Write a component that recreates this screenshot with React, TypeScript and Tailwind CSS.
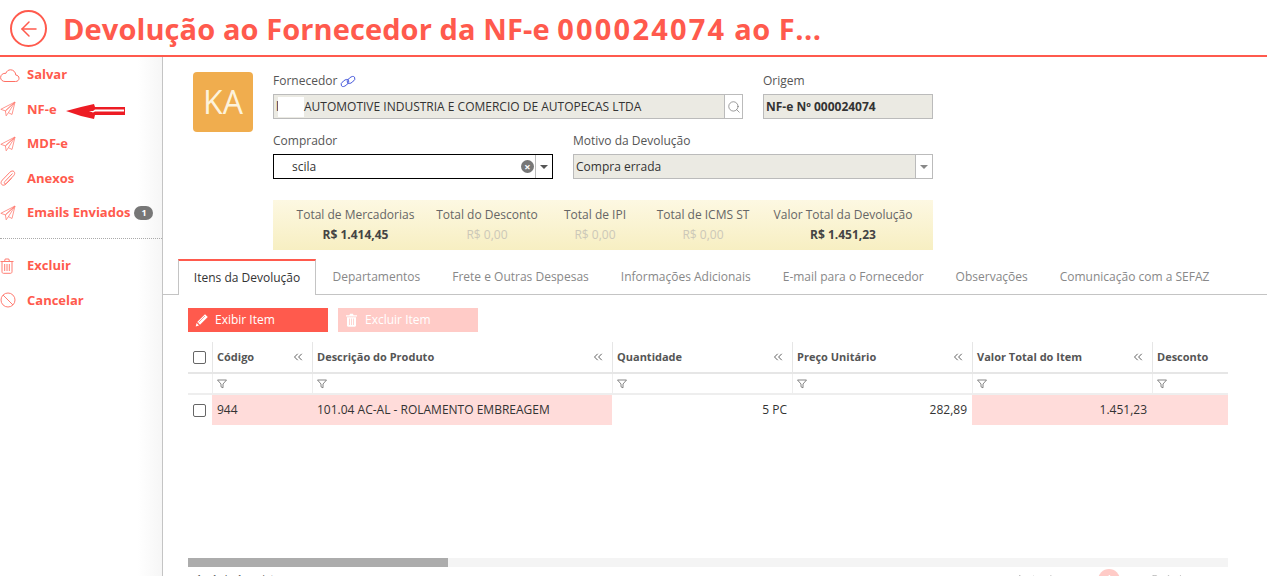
import { ArrowLeft, Search, ChevronsLeft } from 'lucide-react';

const red = '#ff5a4d';

const CloudIcon = () => (
  <svg width="20" height="16" viewBox="0 0 20 16" fill="none" stroke="#ff6f64" strokeWidth="1">
    <path d="M5 14.500h10.500c2.200 0 3.500-1.400 3.500-3.200 0-1.900-1.400-3.200-3.200-3.200C15.600 5 13.300 2.800 10.600 2.800 8.300 2.800 6.500 4.200 5.900 6.300 3 6 .6 7.800.6 10.500c0 2.300 1.900 4 4.400 4z" />
  </svg>
);

const PlaneIcon = () => (
  <svg width="16" height="16" viewBox="0 0 16 16" fill="none" stroke="#ff7d73" strokeWidth="0.800">
    <path d="M15 1 .8 8.300l4.600 1.600zM15 1l-9.600 8.900.8 4.900 2.300-3.300zM15 1l-3 12.500-3.800-2" />
  </svg>
);

const ClipIcon = () => (
  <svg width="16" height="16" viewBox="0 0 16 16" fill="none" stroke="#ff7d73" strokeWidth="1">
    <path d="M12.500 3.500 4.800 11.600c-.7.7-.6 1.500-.2 1.900.5.400 1.200.4 1.900-.3l7-7.400c1.500-1.500 1.500-3.200.5-4.200s-2.700-.8-4.100.6L2.400 10c-1.700 1.800-1.700 3.600-.6 4.600 1.100 1 2.800.8 4.400-.8l5.300-5.500" />
  </svg>
);

const TrashIcon = () => (
  <svg width="14" height="16" viewBox="0 0 14 16" fill="none" stroke="#ff7d73" strokeWidth="1">
    <path d="M.5 3.500h13M2 3.500v10.300c0 .9.600 1.500 1.400 1.500h7.200c.8 0 1.400-.6 1.400-1.500V3.500M4.500 3.500 5.200 1h3.600l.7 2.500M4.700 6v7M7 6v7M9.300 6v7" />
  </svg>
);

const BanIcon = () => (
  <svg width="16" height="16" viewBox="0 0 16 16" fill="none" stroke="#ff7d73" strokeWidth="1">
    <circle cx="8" cy="8" r="7" />
    <path d="M3 3l10 10" />
  </svg>
);

const FilterIcon = () => (
  <svg width="10" height="10" viewBox="0 0 10 10" fill="none" stroke="#777" strokeWidth="0.900">
    <path d="M.5 1h9L6 5v3.800L4 7.800V5z" />
  </svg>
);

const ChainIcon = () => (
  <svg width="16" height="13" viewBox="0 0 16 13" fill="none" stroke="#3f51d8" strokeWidth="0.900">
    <ellipse cx="5" cy="8" rx="4.500" ry="2.500" transform="rotate(-38 5 8)" />
    <ellipse cx="11" cy="5" rx="4.500" ry="2.500" transform="rotate(-38 11 5)" />
  </svg>
);

const PencilFill = () => (
  <svg width="14" height="14" viewBox="0 0 14 14" fill="#fff">
    <path d="M10 1.200 12.800 4 5 11.800 2.200 9zM1.600 10l2.400 2.400-3.300 1z" />
    <path d="M3.500 9.500 10 3" stroke="#ff5a4d" strokeWidth="0.600" />
  </svg>
);

const TrashFill = () => (
  <svg width="13" height="14" viewBox="0 0 13 14" fill="#fff">
    <path d="M1 2.200h11V3.400H1zM4.500 2.200 5 .8h3l.5 1.400zM2 4.200h9v8.400c0 .7-.5 1.100-1.100 1.100H3.100c-.6 0-1.100-.4-1.100-1.100z" />
    <path d="M4.500 5.500v6.500M6.500 5.500v6.500M8.500 5.500v6.500" stroke="#ffcbc7" strokeWidth="0.800" />
  </svg>
);

const MenuItem = (props: { icon: React.ReactNode; label: string; badge?: string }) => (
  <div className="flex h-[34.5px] items-center">
    <div className="w-[27px] flex shrink-0">{props.icon}</div>
    <span className="text-[13px] font-bold text-[#ff5a4d]">{props.label}</span>
    {props.badge && (
      <span className="ml-1 flex h-[14px] w-[19px] items-center justify-center rounded-full bg-[#777] text-[9px] font-bold text-white">
        {props.badge}
      </span>
    )}
  </div>
);

const Total = (props: { label: string; value: string; muted?: boolean; className: string }) => (
  <div className={`flex flex-col items-center whitespace-nowrap ${props.className}`}>
    <span className="text-[12px] leading-[16px] text-[#666]">{props.label}</span>
    <span className={`mt-[4px] text-[12px] leading-[16px] ${props.muted ? 'text-[#ccc8b8]' : 'font-bold text-[#444]'}`}>
      {props.value}
    </span>
  </div>
);

const columns = [
  { title: 'Código', arrow: true },
  { title: 'Descrição do Produto', arrow: true },
  { title: 'Quantidade', arrow: true },
  { title: 'Preço Unitário', arrow: true },
  { title: 'Valor Total do Item', arrow: true },
  { title: 'Desconto', arrow: false },
];

const tabs = [
  'Departamentos',
  'Frete e Outras Despesas',
  'Informações Adicionais',
  'E-mail para o Fornecedor',
  'Observações',
  'Comunicação com a SEFAZ',
];

const Check = () => <div className="mr-[2px] h-[13px] w-[13px] rounded-[2px] border border-[#666] bg-white" />;

export default function App() {
  return (
    <div className="relative h-[576px] w-[1267px] overflow-hidden bg-white font-['Open_Sans',sans-serif] text-[#333]">
      {/* topo */}
      <div className="flex h-[57px] items-start border-b-2 border-[#ff5a4d] pl-[10px] pt-[10px]">
        <div className="flex h-[37px] w-[37px] items-center justify-center rounded-full border-2 border-[#ff5a4d]">
          <ArrowLeft size={24} strokeWidth={1.500} color={red} />
        </div>
        <h1 className="ml-[16px] text-[29px] leading-[38px] font-bold tracking-[0.1px] whitespace-pre text-[#ff5a4d]">
          {'Devolução ao Fornecedor da NF-e '}
          <span className="tracking-[2.2px]">000024074</span>
          <span className="tracking-[0.5px]">{' ao F...'}</span>
        </h1>
      </div>

      <div className="flex h-[519px]">
        {/* menu lateral */}
        <div className="w-[163px] shrink-0 border-r border-[#c4c4c4] bg-gradient-to-r from-white from-85% to-[#f6f6f6] pt-[0.5px]">
          <MenuItem icon={<CloudIcon />} label="Salvar" />
          <MenuItem icon={<PlaneIcon />} label="NF-e" />
          <MenuItem icon={<PlaneIcon />} label="MDF-e" />
          <MenuItem icon={<ClipIcon />} label="Anexos" />
          <MenuItem icon={<PlaneIcon />} label="Emails Enviados" badge="1" />
          <div className="mt-[8px] mb-[9.500px] border-t border-dotted border-[#aaa]" />
          <MenuItem icon={<TrashIcon />} label="Excluir" />
          <MenuItem icon={<BanIcon />} label="Cancelar" />
        </div>

        {/* conteudo */}
        <div className="min-w-0 flex-1">
          <div className="flex pl-[30px] pt-[15px]">
            <div className="flex h-[60px] w-[60px] items-center justify-center rounded-[4px] bg-[#f0ad4e] text-[32px] text-[#fdf3dc]">
              KA
            </div>
            <div className="ml-[20px] w-[660px]">
              <div className="flex gap-[20px]">
                <div className="w-[470px]">
                  <div className="flex h-[22px] items-center gap-[3px] pb-[4px] text-[12px] text-[#555]">
                    Fornecedor <ChainIcon />
                  </div>
                  <div className="flex h-[25px] items-center border border-[#bbb] bg-[#ebeae3] pl-[2px] text-[12px] text-[#333]">
                    <div className="w-[2px] leading-[20px]">l</div>
                    <div className="h-[20px] w-[26px] bg-white" />
                    <span className="flex-1">AUTOMOTIVE INDUSTRIA E COMERCIO DE AUTOPECAS LTDA</span>
                    <div className="flex h-full w-[18px] items-center justify-center border-l border-[#bbb] bg-white">
                      <Search size={14} strokeWidth={1.100} color="#666" />
                    </div>
                  </div>
                </div>
                <div className="w-[170px]">
                  <div className="flex h-[22px] items-center pb-[4px] text-[12px] text-[#555]">Origem</div>
                  <div className="flex h-[25px] items-center border border-[#bbb] bg-[#ebeae3] pl-[2px] text-[12px] font-bold text-[#333]">
                    NF-e Nº 000024074
                  </div>
                </div>
              </div>

              <div className="mt-[13px] flex gap-[20px]">
                <div className="w-[280px]">
                  <div className="flex h-[22px] items-center pb-[4px] text-[12px] text-[#555]">Comprador</div>
                  <div className="flex h-[25px] items-center border border-black bg-white pl-[18px] text-[12px] text-[#333]">
                    <span className="flex-1">scila</span>
                    <div className="mr-[1px] flex h-[13px] w-[13px] items-center justify-center rounded-full bg-[#777] text-[11px] leading-none font-bold text-white">
                      ×
                    </div>
                    <div className="flex h-full w-[17px] items-center justify-center border-l border-[#bbb]">
                      <div className="h-0 w-0 border-x-[4px] border-t-[4px] border-x-transparent border-t-[#555]" />
                    </div>
                  </div>
                </div>
                <div className="w-[360px]">
                  <div className="flex h-[22px] items-center pb-[4px] text-[12px] text-[#555]">Motivo da Devolução</div>
                  <div className="flex h-[25px] items-center border border-[#bbb] bg-[#ebeae3] pl-[2px] text-[12px] text-[#333]">
                    <span className="flex-1">Compra errada</span>
                    <div className="flex h-full w-[17px] items-center justify-center border-l border-[#bbb] bg-white">
                      <div className="h-0 w-0 border-x-[4px] border-t-[4px] border-x-transparent border-t-[#888]" />
                    </div>
                  </div>
                </div>
              </div>

              <div className="mt-[21px] flex h-[50px] items-center bg-gradient-to-b from-[#fdf8e2] to-[#f7efc2] pl-[23px] pb-[1px] text-center">
                <Total label="Total de Mercadorias" value="R$ 1.414,45" className="w-[119px]" />
                <Total label="Total do Desconto" value="R$ 0,00" muted className="ml-[21px] w-[102px]" />
                <Total label="Total de IPI" value="R$ 0,00" muted className="ml-[26px] w-[62px]" />
                <Total label="Total de ICMS ST" value="R$ 0,00" muted className="ml-[30px] w-[94px]" />
                <Total label="Valor Total da Devolução" value="R$ 1.451,23" className="ml-[23px] w-[140px]" />
              </div>
            </div>
          </div>

          {/* abas */}
          <div className="mt-[9px] flex h-[36px] border-b border-[#c4c4c4] pl-[15px]">
            <div className="-mb-[1px] flex h-[36px] w-[138px] items-center justify-center border-x border-t-2 border-x-[#c4c4c4] border-t-[#ff5a4d] bg-white text-[12px] text-[#333]">
              Itens da Devolução
            </div>
            <div className="ml-[16.500px] flex h-[35px] items-center gap-[32px] text-[12px] text-[#888]">
              {tabs.map((tab) => (
                <span key={tab}>{tab}</span>
              ))}
            </div>
          </div>

          {/* botoes */}
          <div className="mt-[13px] ml-[25px] flex gap-[10px]">
            <div className="flex h-[24px] w-[140px] items-center bg-[#ff5a4d] pb-[1px] pl-[7px] text-[12px] text-white">
              <PencilFill />
              <span className="ml-[6px]">Exibir Item</span>
            </div>
            <div className="flex h-[24px] w-[140px] items-center bg-[#ffcbc7] pb-[1px] pl-[7px] text-[12px] text-white">
              <TrashFill />
              <span className="ml-[7px]">Excluir Item</span>
            </div>
          </div>

          {/* tabela */}
          <div className="mt-[10px] ml-[25px] w-[1040px]">
            <div className="grid h-[32px] grid-cols-[24px_100px_300px_180px_180px_180px_76px] border-b-2 border-[#e6e6e6]">
              <div className="flex items-center justify-center">
                <Check />
              </div>
              {columns.map((col) => (
                <div key={col.title} className="flex items-center justify-between border-l border-[#e6e6e6] pr-[7px] pl-[4px] text-[11px] font-bold text-[#555]">
                  <span>{col.title}</span>
                  {col.arrow && <ChevronsLeft size={14} strokeWidth={1.600} color="#555" />}
                </div>
              ))}
            </div>
            <div className="grid h-[21px] grid-cols-[24px_100px_300px_180px_180px_180px_76px] border-b-2 border-[#eee]">
              <div />
              {columns.map((col) => (
                <div key={col.title} className="flex items-center border-l border-[#eee] pl-[4px]">
                  <FilterIcon />
                </div>
              ))}
            </div>
            <div className="grid h-[30px] grid-cols-[24px_100px_300px_180px_180px_180px_76px] text-[12px] text-[#333]">
              <div className="flex items-center justify-center">
                <Check />
              </div>
              <div className="flex items-center bg-[#ffdcda] pl-[5px]">944</div>
              <div className="flex items-center bg-[#ffdcda] pl-[5px]">101.04 AC-AL - ROLAMENTO EMBREAGEM</div>
              <div className="flex items-center justify-end pr-[5px]">5 PC</div>
              <div className="flex items-center justify-end pr-[5px]">282,89</div>
              <div className="flex items-center justify-end bg-[#ffdcda] pr-[5px]">1.451,23</div>
              <div className="bg-[#ffdcda]" />
            </div>

            {/* barra de rolagem */}
            <div className="mt-[133px] h-[9px] bg-[#f4f4f4]">
              <div className="h-full w-[260px] bg-[#acacac]" />
            </div>
            <div className="mt-[5px] flex items-start justify-between text-[11px] leading-[14px]">
              <span className="pl-[8px] text-[#555]">1 - 1 de 1 registros</span>
              <div className="mt-[-3px] mr-[8px] flex items-start text-[#bbb] blur-[0.5px]">
                <span className="mt-[3px] whitespace-pre tracking-[1px]">{'«  ‹  Anterior'}</span>
                <div className="mr-[31px] ml-[32px] flex h-[22px] w-[22px] justify-center rounded-full bg-[#ffcbc7] pt-[3px] text-white">1</div>
                <span className="mt-[3px] whitespace-pre tracking-[1px]">{'Próximo › »'}</span>
              </div>
            </div>
          </div>
        </div>
      </div>

      {/* seta vermelha desenhada em cima do print */}
      <svg className="absolute top-[102px] left-[65px]" width="62" height="18" viewBox="0 0 62 18">
        <path d="M1 9 16 5l13-3 1 3h30v8H30l-1 4-13-3z" fill="#ed1c24" />
        <path d="M24 9h4l2-1.500h29v2H30l-2 1z" fill="#fff" />
      </svg>
    </div>
  );
}
